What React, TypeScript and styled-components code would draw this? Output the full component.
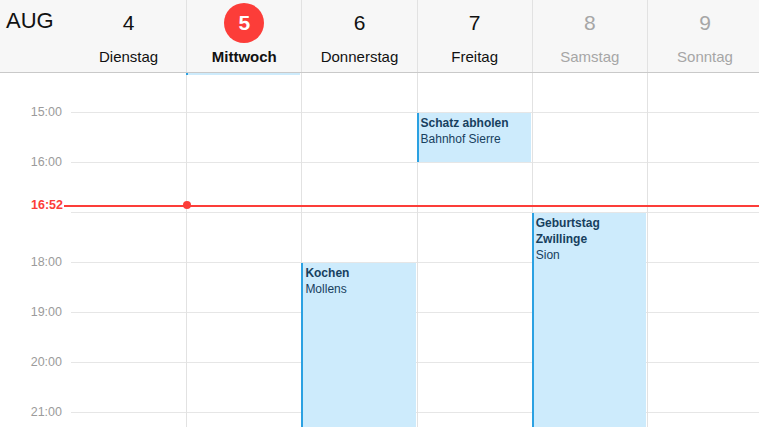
import React from 'react';
import styled, { createGlobalStyle } from 'styled-components';

const GlobalStyle = createGlobalStyle`
  html, body {
    margin: 0;
    padding: 0;
    background: #fff;
    font-family: "Liberation Sans", Arial, sans-serif;
    overflow: hidden;
  }
`;

const HOUR = 50;
const FIRST_HOUR = 15;
const TOP_PAD = 39; // from body top to the 15:00 line
const COL_W = 115.2;

const Page = styled.div`
  width: 759px;
  height: 427px;
  overflow: hidden;
  display: flex;
  flex-direction: column;
  position: relative;
`;

const Header = styled.header`
  display: flex;
  height: 72px;
  flex-shrink: 0;
  background: #f7f7f7;
  border-bottom: 1px solid #c9c9c9;
`;

const MonthCell = styled.div`
  width: 71px;
  flex-shrink: 0;
  font-size: 22px;
  color: #111;
  padding: 8px 0 0 6px;
  box-sizing: border-box;
`;

const DayHead = styled.div<{ $first?: boolean }>`
  width: ${COL_W}px;
  flex-shrink: 0;
  display: flex;
  flex-direction: column;
  align-items: center;
  border-left: ${(p) => (p.$first ? 'none' : '1px solid #e2e2e2')};
  box-sizing: border-box;
`;

const DayNum = styled.div<{ $today?: boolean; $muted?: boolean }>`
  width: 40px;
  height: 40px;
  margin-top: 3px;
  border-radius: 50%;
  display: flex;
  align-items: center;
  justify-content: center;
  font-size: 21px;
  font-weight: ${(p) => (p.$today ? 700 : 400)};
  background: ${(p) => (p.$today ? '#fc3d39' : 'transparent')};
  color: ${(p) => (p.$today ? '#fff' : p.$muted ? '#a6a6a6' : '#111')};
`;

const DayName = styled.div<{ $today?: boolean; $muted?: boolean }>`
  margin-top: 5px;
  font-size: 15px;
  font-weight: ${(p) => (p.$today ? 700 : 400)};
  color: ${(p) => (p.$muted ? '#a6a6a6' : '#111')};
`;

const Body = styled.div`
  display: flex;
  flex: 1;
  position: relative;
  overflow: hidden;
`;

const Gutter = styled.div`
  width: 71px;
  flex-shrink: 0;
  padding-top: ${TOP_PAD - 7}px;
  box-sizing: border-box;
`;

const TimeLabel = styled.div`
  height: ${HOUR}px;
  line-height: 14px;
  font-size: 12.5px;
  color: #9b9b9b;
  text-align: right;
  padding-right: 9px;
`;

const DayCol = styled.div<{ $first?: boolean }>`
  width: ${COL_W}px;
  flex-shrink: 0;
  position: relative;
  border-left: ${(p) => (p.$first ? 'none' : '1px solid #e2e2e2')};
  box-sizing: border-box;
`;

const TopSlot = styled.div`
  height: ${TOP_PAD}px;
`;

const Slot = styled.div`
  height: ${HOUR}px;
  border-top: 1px solid #e6e6e6;
  box-sizing: border-box;
`;

const Event = styled.div`
  position: absolute;
  left: -1px;
  right: 1px;
  background: #cdebfc;
  border-left: 2px solid #2ba1e2;
  padding: 2px 2px;
  box-sizing: border-box;
  overflow: hidden;
  color: #17405e;
  font-size: 12px;
  line-height: 16px;
`;

const EventTitle = styled.div`
  font-weight: 700;
`;

const NowLine = styled.div`
  position: absolute;
  left: 0;
  right: 0;
  height: 14px;
  display: flex;
  align-items: flex-start;
  pointer-events: none;
  z-index: 2;
`;

const NowLabel = styled.div`
  width: 64px;
  line-height: 14px;
  text-align: right;
  font-size: 12.5px;
  font-weight: 700;
  color: #fc3d39;
  background: #fff;
  padding-right: 1px;
  box-sizing: border-box;
`;

const NowRule = styled.div`
  flex: 1;
  margin-top: 7px;
  height: 0;
  border-top: 2px solid #fc3d39;
  position: relative;
`;

const NowDot = styled.div`
  position: absolute;
  left: 119px;
  top: -6px;
  width: 8px;
  height: 8px;
  border-radius: 50%;
  background: #fc3d39;
`;

type Ev = { day: number; start: number; end: number; title: string; place?: string };

const days = [
  { num: 4, name: 'Dienstag' },
  { num: 5, name: 'Mittwoch', today: true },
  { num: 6, name: 'Donnerstag' },
  { num: 7, name: 'Freitag' },
  { num: 8, name: 'Samstag', muted: true },
  { num: 9, name: 'Sonntag', muted: true },
];

const events: Ev[] = [
  { day: 1, start: 13, end: 14.26, title: '' },
  { day: 3, start: 15, end: 16, title: 'Schatz abholen', place: 'Bahnhof Sierre' },
  { day: 2, start: 18, end: 23, title: 'Kochen', place: 'Mollens' },
  { day: 4, start: 17, end: 23, title: 'Geburtstag Zwillinge', place: 'Sion' },
];

const hours = [15, 16, 17, 18, 19, 20, 21, 22];
const labelHours = [15, 16, 17, 18, 19, 20, 21];

const yOf = (h: number) => TOP_PAD + (h - FIRST_HOUR) * HOUR;

function App() {
  const now = 16 + 52 / 60;
  return (
    <Page>
      <GlobalStyle />
      <Header>
        <MonthCell>AUG</MonthCell>
        {days.map((d, i) => (
          <DayHead key={d.num} $first={i === 0}>
            <DayNum $today={d.today} $muted={d.muted}>{d.num}</DayNum>
            <DayName $today={d.today} $muted={d.muted}>{d.name}</DayName>
          </DayHead>
        ))}
      </Header>
      <Body>
        <Gutter>
          {labelHours.map((h) => (
            <TimeLabel key={h}>{h === 17 ? '' : `${h}:00`}</TimeLabel>
          ))}
        </Gutter>
        {days.map((d, i) => (
          <DayCol key={d.num} $first={i === 0}>
            <TopSlot />
            {hours.map((h) => (
              <Slot key={h} />
            ))}
            {events
              .filter((e) => e.day === i)
              .map((e, k) => (
                <Event
                  key={k}
                  style={{ top: yOf(e.start) + 1, height: yOf(e.end) - yOf(e.start) - 1 }}
                >
                  {e.title && <EventTitle>{e.title}</EventTitle>}
                  {e.place && <div>{e.place}</div>}
                </Event>
              ))}
          </DayCol>
        ))}
        <NowLine style={{ top: Math.round(yOf(now)) - 7 }}>
          <NowLabel>16:52</NowLabel>
          <NowRule>
            <NowDot />
          </NowRule>
        </NowLine>
      </Body>
    </Page>
  );
}

export default App;
